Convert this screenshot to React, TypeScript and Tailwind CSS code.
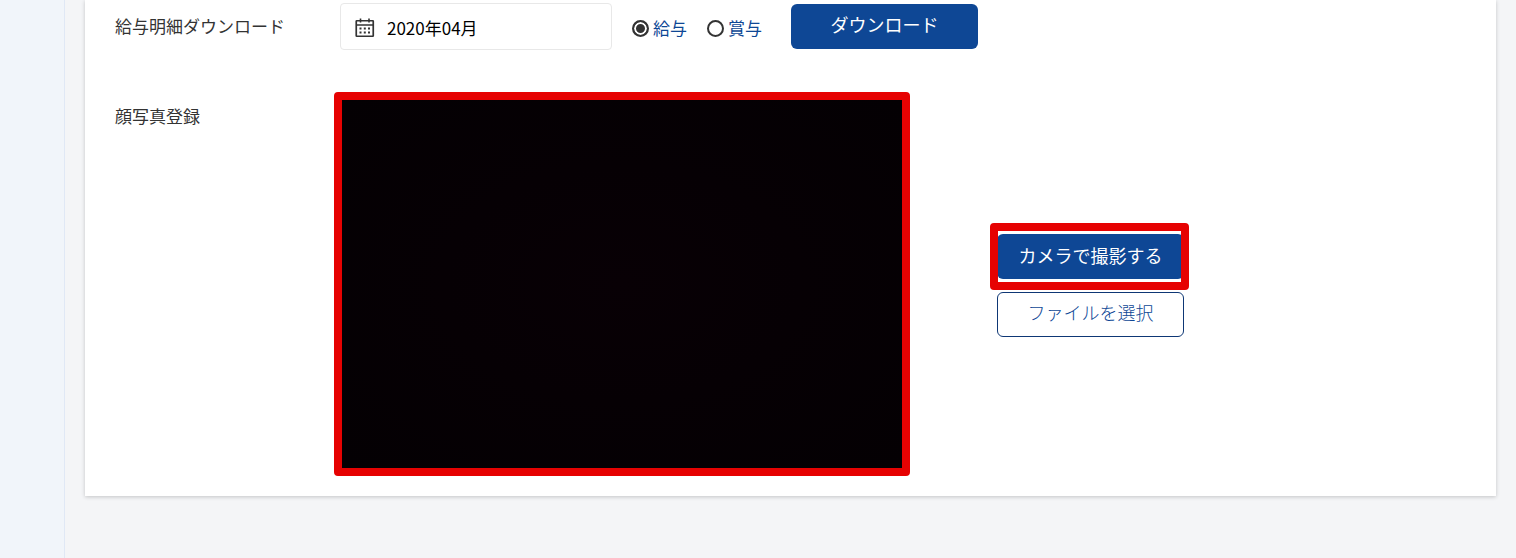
import { useState } from "react";

type SlipType = "salary" | "bonus";

const slipTypes: { value: SlipType; label: string }[] = [
  { value: "salary", label: "給与" },
  { value: "bonus", label: "賞与" },
];

function CalendarIcon() {
  return (
    <svg viewBox="0 0 20 20" className="h-5 w-5 shrink-0" fill="none" stroke="#333" aria-hidden="true">
      <rect x="1.25" y="2.75" width="17" height="15.5" rx="0.5" strokeWidth="1.7" />
      <path d="M1 7h17.5" strokeWidth="1.5" />
      <path d="M5.5 0.5v4M14 0.5v4" strokeWidth="1.6" />
      <path d="M4.5 10.5h2M8.8 10.5h2M13 10.5h2M4.5 14.5h2M8.8 14.5h2M13 14.5h2" strokeWidth="2" />
    </svg>
  );
}

export default function App() {
  const [month, setMonth] = useState("2020年04月");
  const [slipType, setSlipType] = useState<SlipType>("salary");

  return (
    <div className="flex min-h-screen bg-[#f4f5f7] font-['Noto_Sans_CJK_JP',sans-serif] text-[#333]">
      <aside className="w-[65px] shrink-0 border-r border-[#e0e8f5] bg-[#f1f5fa]" />

      <main className="min-w-0 flex-1 px-5 pb-[62px]">
        <div className="bg-white px-[30px] pt-[3px] pb-[26px] shadow-[0_1px_4px_rgba(0,0,0,0.2)]">
          <div className="flex items-center">
            <label htmlFor="month" className="w-[225px] shrink-0 pb-0.5 text-[17px] leading-6">
              給与明細ダウンロード
            </label>
            <div className="flex h-[47px] w-[272px] items-center gap-3 rounded border border-[#e8e8e8] pt-0.5 pl-[14px]">
              <CalendarIcon />
              <input
                id="month"
                type="text"
                value={month}
                onChange={(e) => setMonth(e.target.value)}
                className="w-full min-w-0 bg-transparent text-[17px] leading-6 text-black outline-none"
              />
            </div>
            <div className="ml-5 flex gap-5 pt-0.5">
              {slipTypes.map((type) => (
                <label key={type.value} className="flex items-center gap-1 text-[17px] leading-6 text-[#0e4795]">
                  <input
                    type="radio"
                    name="slipType"
                    value={type.value}
                    checked={slipType === type.value}
                    onChange={() => setSlipType(type.value)}
                    className="mt-0.5 h-[17px] w-[17px] appearance-none rounded-full border-2 border-[#333] checked:bg-[#333] checked:shadow-[inset_0_0_0_2px_white]"
                  />
                  {type.label}
                </label>
              ))}
            </div>
            <button type="button" className="ml-[29px] h-[45px] w-[187px] rounded-md bg-[#0e4795] pb-1.5 text-lg text-white">
              ダウンロード
            </button>
          </div>

          <div className="mt-12 flex">
            <h2 className="w-[225px] shrink-0 pt-1.5 text-[17px] leading-6">顔写真登録</h2>
            <div className="flex items-center">
              <div className="relative h-[372px] w-[564px] bg-radial from-[#080005] to-[#040003]">
                <div className="absolute -inset-[6px] rounded border-8 border-[#e60202]" />
              </div>
              <div className="ml-[93px] flex w-[187px] flex-col gap-[13px] pt-0.5">
                <div className="relative">
                  <button type="button" className="h-[45px] w-full rounded-md bg-[#0e4795] pb-0.5 text-lg text-white">
                    カメラで撮影する
                  </button>
                  <div className="pointer-events-none absolute -inset-y-[11px] -right-[5px] -left-[7px] rounded border-8 border-[#e60202]" />
                </div>
                <button type="button" className="h-[45px] w-full rounded-md border border-[#0e3775] bg-white pb-1 text-lg font-light text-[#0e4795]">
                  ファイルを選択
                </button>
              </div>
            </div>
          </div>
        </div>
      </main>
    </div>
  );
}
